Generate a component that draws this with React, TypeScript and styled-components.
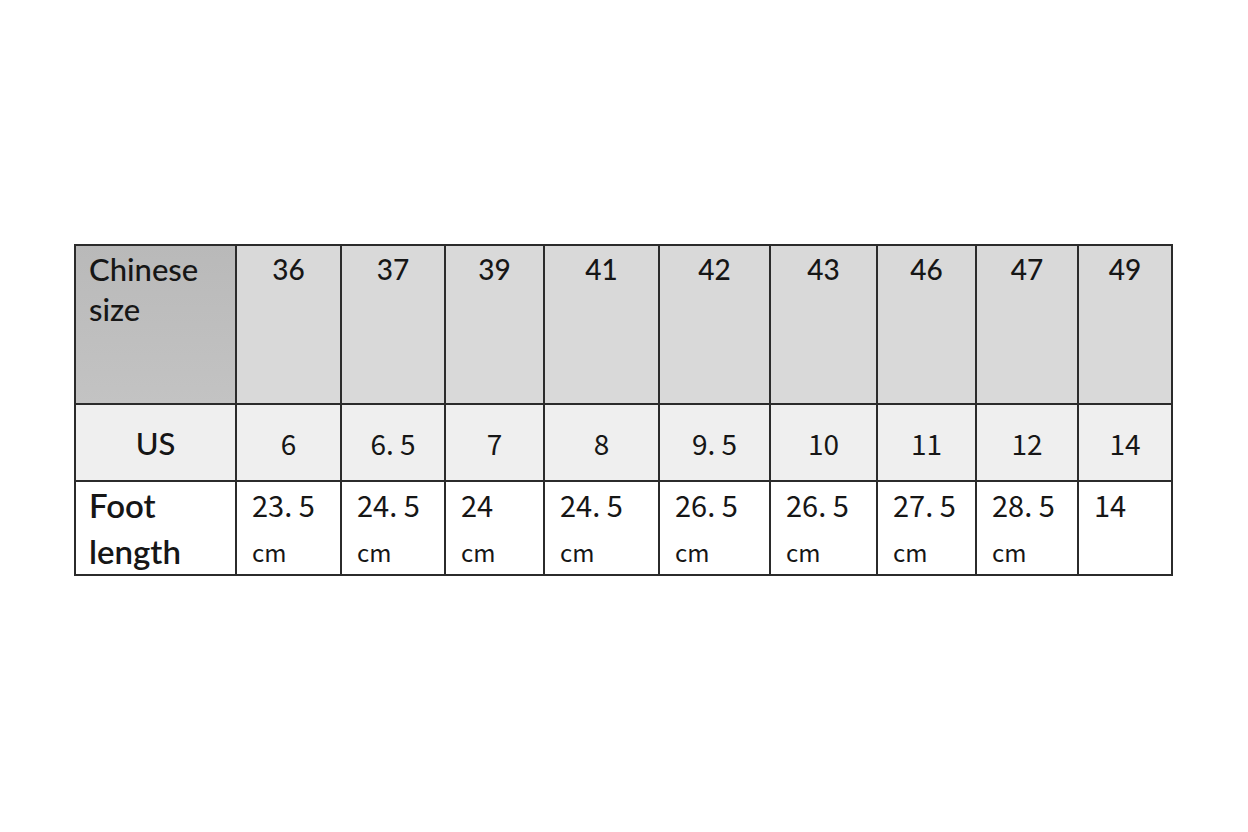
import React from 'react'
import styled, { createGlobalStyle } from 'styled-components'

const GlobalStyle = createGlobalStyle`
  html, body {
    margin: 0;
    padding: 0;
    background: #ffffff;
  }
  body {
    font-family: Lato, "Noto Sans", sans-serif;
    color: #1a1a1a;
  }
`

const Page = styled.div`
  width: 1248px;
  height: 832px;
  box-sizing: border-box;
  padding: 244px 0 0 74px;
  background: #fff;
`

const Table = styled.table`
  border-collapse: collapse;
  table-layout: fixed;
  width: 1099px;
  border: 2px solid #2b2b2b;
`

const Row = styled.tr<{ $height: number; $bg: string }>`
  height: ${(p) => p.$height}px;
  background: ${(p) => p.$bg};
`

const Cell = styled.td`
  border: 2px solid #2b2b2b;
  padding: 0;
  box-sizing: border-box;
  color: #161616;
`

const LabelCell = styled(Cell)<{ $dark?: boolean }>`
  vertical-align: top;
  padding: 3px 0 0 13px;
  font-family: Lato, "Noto Sans", sans-serif;
  font-weight: 500;
  font-size: 31px;
  line-height: 40px;
  background: ${(p) => (p.$dark ? 'linear-gradient(180deg, #b9b9b9, #c3c3c3)' : 'transparent')};
`

const SizeCell = styled(Cell)`
  vertical-align: top;
  text-align: center;
  padding-top: 3px;
  font-family: Lato, "Noto Sans", sans-serif;
  font-weight: 500;
  font-size: 28px;
  line-height: 40px;
`

const UsLabel = styled(Cell)`
  text-align: center;
  vertical-align: middle;
  font-family: Lato, "Noto Sans", sans-serif;
  font-weight: 500;
  font-size: 31px;
`

const UsCell = styled(Cell)`
  text-align: center;
  vertical-align: middle;
  font-family: "Noto Sans CJK SC", "DejaVu Sans", sans-serif;
  font-weight: 400;
  font-size: 28px;
`

const FootLabel = styled(Cell)`
  vertical-align: top;
  padding: 0 0 0 13px;
  font-family: Lato, "Noto Sans", sans-serif;
  font-weight: 600;
  font-size: 33px;
  line-height: 46px;
`

const FootCell = styled(Cell)`
  vertical-align: top;
  padding: 0 0 0 15px;
  font-family: "Noto Sans CJK SC", "DejaVu Sans", sans-serif;
  font-weight: 400;
`

const Num = styled.div`
  font-size: 29px;
  line-height: 44px;
`

const Unit = styled.div`
  margin-top: 6px;
  font-size: 24px;
  line-height: 40px;
`

const widths = [161, 105, 104, 99, 115, 111, 107, 99, 102, 94]
const chinese = ['36', '37', '39', '41', '42', '43', '46', '47', '49']
const us = ['6', '6. 5', '7', '8', '9. 5', '10', '11', '12', '14']
const foot = ['23. 5', '24. 5', '24', '24. 5', '26. 5', '26. 5', '27. 5', '28. 5', '14']

const App = () => {
  return (
    <Page>
      <GlobalStyle />
      <Table>
        <colgroup>
          {widths.map((w, i) => (
            <col key={i} style={{ width: w }} />
          ))}
        </colgroup>
        <tbody>
          <Row $height={159} $bg="#d9d9d9">
            <LabelCell $dark>
              Chinese
              <br />
              size
            </LabelCell>
            {chinese.map((c) => (
              <SizeCell key={c}>{c}</SizeCell>
            ))}
          </Row>
          <Row $height={77} $bg="#efefef">
            <UsLabel>US</UsLabel>
            {us.map((u, i) => (
              <UsCell key={i}>{u}</UsCell>
            ))}
          </Row>
          <Row $height={93} $bg="#ffffff">
            <FootLabel>
              Foot
              <br />
              length
            </FootLabel>
            {foot.map((f, i) => (
              <FootCell key={i}>
                <Num>{f}</Num>
                {i < 8 && <Unit>cm</Unit>}
              </FootCell>
            ))}
          </Row>
        </tbody>
      </Table>
    </Page>
  )
}

export default App
